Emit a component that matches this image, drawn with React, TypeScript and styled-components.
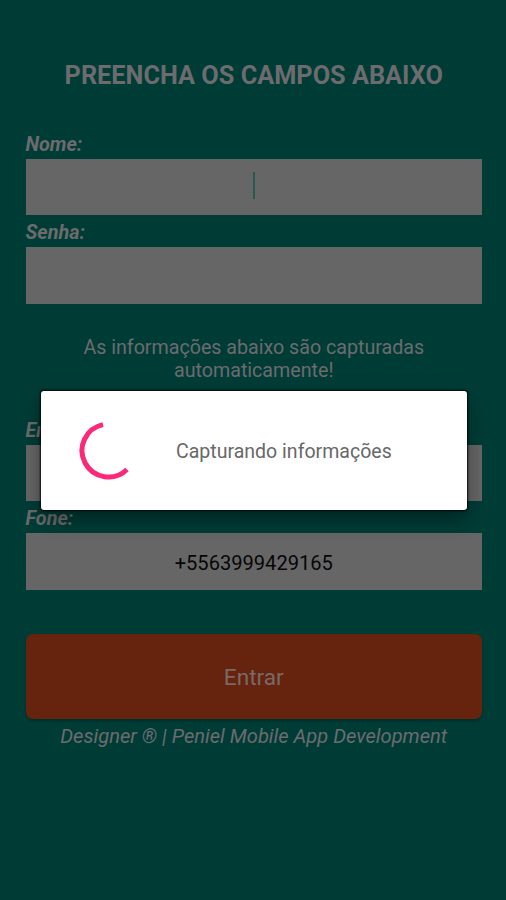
import React from "react";
import styled, { createGlobalStyle } from "styled-components";

const GlobalStyle = createGlobalStyle`
  * { box-sizing: border-box; }
  body { margin: 0; background: #003c36; font-family: Roboto, "Liberation Sans", sans-serif; }
`;

const Screen = styled.main`
  position: relative;
  height: 900px;
  padding: 60px 24px 0 25.5px;
  overflow: hidden;
  background: #003c36;
  color: #6c6b6e;
`;

const Title = styled.h1`
  margin: 0 0 35.5px;
  height: 31px;
  font-size: 25.3px;
  line-height: 32px;
  font-weight: 700;
  text-align: center;
  white-space: nowrap;
`;

const Field = styled.div`
  height: 88.5px;
`;

const FieldName = styled.span`
  display: block;
  height: 32px;
  padding-top: 6px;
  font-size: 19.8px;
  line-height: 23px;
  font-weight: 700;
  font-style: italic;
`;

const FieldBox = styled.span`
  display: flex;
  align-items: center;
  justify-content: center;
  height: 56.5px;
  padding-top: 3px;
  background: #666;
  color: #060606;
  font-size: 20.1px;
`;

const Caret = styled.span`
  width: 2px;
  height: 27px;
  margin: -5px 0 0 1px;
  background: #2a584e;
`;

const Notice = styled.p`
  height: 109px;
  margin: 0;
  padding-top: 32px;
  font-size: 19.65px;
  line-height: 23.5px;
  text-align: center;
`;

const Submit = styled.button`
  display: block;
  width: 100%;
  height: 85px;
  margin-top: 44px;
  padding: 2px 0 0;
  border: 0;
  border-radius: 7px;
  background: #66230e;
  box-shadow: 0 2px 3px rgba(0, 0, 0, 0.25);
  color: #7a6a66;
  font: 400 22.6px Roboto, sans-serif;
`;

const Credit = styled.footer`
  padding-top: 5px;
  font-size: 20.1px;
  line-height: 24px;
  font-style: italic;
  text-align: center;
  white-space: nowrap;
`;

const Dialog = styled.div`
  position: absolute;
  top: 391px;
  left: 41px;
  width: 425.5px;
  height: 119px;
  display: flex;
  align-items: center;
  padding-left: 38px;
  border-radius: 3px;
  background: #fff;
  box-shadow: 0 0 2px 1px rgba(0, 0, 0, 0.85), 0 9px 20px rgba(0, 0, 0, 0.38);
  color: #686868;
  font-size: 19.55px;
`;

const Spinner = styled.svg`
  width: 59px;
  height: 59px;
  flex: none;
  margin-right: 38px;
`;

const Message = styled.span`
  padding-top: 2px;
`;

export default function App() {
  return (
    <>
      <GlobalStyle />
      <Screen>
        <Title>PREENCHA OS CAMPOS ABAIXO</Title>
        <Field>
          <FieldName>Nome:</FieldName>
          <FieldBox><Caret /></FieldBox>
        </Field>
        <Field>
          <FieldName>Senha:</FieldName>
          <FieldBox />
        </Field>
        <Notice>
          As informações abaixo são capturadas<br />automaticamente!
        </Notice>
        <Field>
          <FieldName>Email:</FieldName>
          <FieldBox />
        </Field>
        <Field>
          <FieldName>Fone:</FieldName>
          <FieldBox>+5563999429165</FieldBox>
        </Field>
        <Submit>Entrar</Submit>
        <Credit>Designer ® | Peniel Mobile App Development</Credit>
        <Dialog role="dialog">
          <Spinner viewBox="0 0 59 59" fill="none">
            <path d="M24 3.6A26.5 26.5 0 1 0 48 48.5" stroke="#fc2878" strokeWidth="5" />
          </Spinner>
          <Message>Capturando informações</Message>
        </Dialog>
      </Screen>
    </>
  );
}
